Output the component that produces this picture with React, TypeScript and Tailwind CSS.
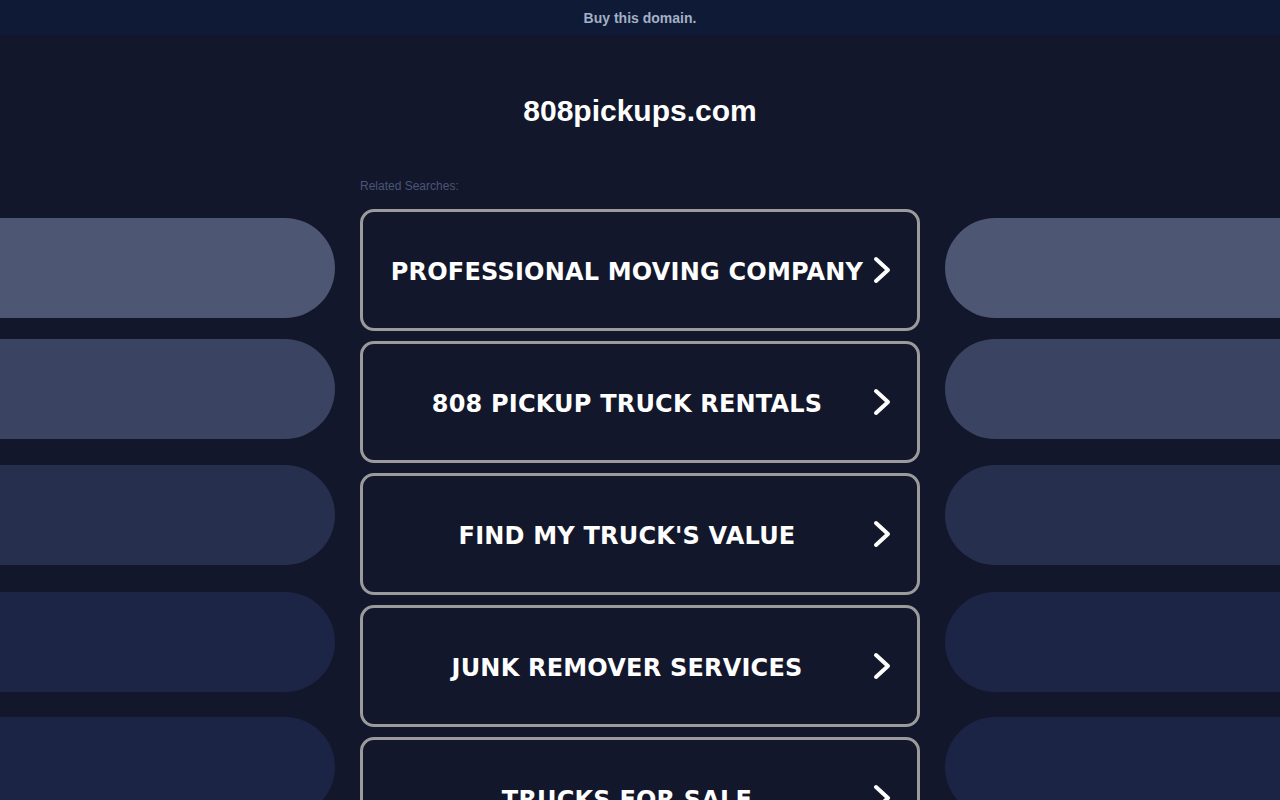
import React from "react";

const items = [
  "PROFESSIONAL MOVING COMPANY",
  "808 PICKUP TRUCK RENTALS",
  "FIND MY TRUCK'S VALUE",
  "JUNK REMOVER SERVICES",
  "TRUCKS FOR SALE",
];

function Chevron() {
  return (
    <svg width="20" height="28" viewBox="0 0 20 28" className="absolute right-[25px] top-1/2 -translate-y-1/2">
      <path d="M4 3 L16 14 L4 25" fill="none" stroke="#ffffff" strokeWidth="4" strokeLinecap="round" strokeLinejoin="round" />
    </svg>
  );
}

function Pills({ side }: { side: "left" | "right" }) {
  const round = side === "left" ? "rounded-r-[50px]" : "rounded-l-[50px]";
  return (
    <div className="flex flex-col pt-[218px]">
      <div className={`h-[100px] bg-[#4d5673] ${round}`} />
      <div className={`mt-[21px] h-[100px] bg-[#3a4361] ${round}`} />
      <div className={`mt-[26px] h-[100px] bg-[#262f4e] ${round}`} />
      <div className={`mt-[27px] h-[100px] bg-[#1d2546] ${round}`} />
      <div className={`mt-[25px] h-[100px] bg-[#1b2444] ${round}`} />
    </div>
  );
}

export default function App() {
  return (
    <div className="bg-[#12172b] font-['Liberation_Sans',Arial,sans-serif] overflow-hidden h-[800px]">
      <div className="h-[35px] bg-[#0f1b36] flex items-center justify-center">
        <span className="text-[14px] leading-[16px] font-bold text-[#a3b0c5] pt-[1px]">Buy this domain.</span>
      </div>
      <div className="relative">
        <div className="grid grid-cols-[1fr_560px_1fr] gap-x-[25px] absolute inset-x-0 top-[-35px]">
          <Pills side="left" />
          <div />
          <Pills side="right" />
        </div>
        <div className="relative w-[560px] mx-auto">
          <h1 className="text-center text-white font-bold text-[30px] leading-[34px] pt-[59px]">808pickups.com</h1>
          <div className="mt-[51px] text-[12px] leading-[14px] text-[#4b5577]">Related Searches:</div>
          <div className="mt-[16px] flex flex-col gap-[10px]">
            {items.map((t) => (
              <div
                key={t}
                className="relative h-[122px] border-[3px] border-[#9b9b9b] rounded-[14px] bg-[#12172b] flex items-center justify-center pr-[26px]"
              >
                <span className="text-white font-bold text-[24px] leading-[28px] pt-[3px] font-['DejaVu_Sans',Verdana,sans-serif] tracking-[0.2px]">
                  {t}
                </span>
                <Chevron />
              </div>
            ))}
          </div>
        </div>
      </div>
    </div>
  );
}
